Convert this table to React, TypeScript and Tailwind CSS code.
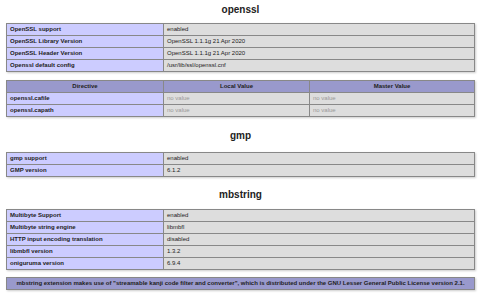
const font = { fontFamily: '"Liberation Sans", Arial, sans-serif' }

type Row = [string, string]

const KvTable = ({ rows }: { rows: Row[] }) => (
  <div className="mx-auto w-[469px] border-x border-b border-[#888] shadow-[1px_1px_2px_#ccc]">
    {rows.map(([k, v]) => (
      <div key={k} className="flex h-[12px] border-t border-[#888] text-[6px] leading-[11px] text-[#222]">
        <div className="w-[157px] shrink-0 border-r border-[#888] bg-[#ccf] pl-[3px] font-bold">{k}</div>
        <div className="flex-1 bg-[#ddd] pl-[3px]">{v}</div>
      </div>
    ))}
  </div>
)

const Title = ({ children, className }: { children: string; className: string }) => (
  <h2 className={`text-center text-[10px] leading-[12px] font-bold text-[#222] ${className}`}>{children}</h2>
)

export default function App() {
  return (
    <div className="h-[300px] w-[481px] overflow-hidden bg-white" style={font}>
      <Title className="pt-[4px] mb-[7px]">openssl</Title>
      <KvTable
        rows={[
          ['OpenSSL support', 'enabled'],
          ['OpenSSL Library Version', 'OpenSSL 1.1.1g  21 Apr 2020'],
          ['OpenSSL Header Version', 'OpenSSL 1.1.1g  21 Apr 2020'],
          ['Openssl default config', '/usr/lib/ssl/openssl.cnf'],
        ]}
      />

      <div className="mx-auto mt-[8px] w-[469px] border-x border-b border-[#888] shadow-[1px_1px_2px_#ccc] text-[6px] leading-[11px] text-[#222]">
        <div className="flex h-[12px] border-t border-[#888] bg-[#99c] font-bold text-center">
          <div className="w-[157px] shrink-0 border-r border-[#888]">Directive</div>
          <div className="w-[146px] shrink-0 border-r border-[#888]">Local Value</div>
          <div className="flex-1">Master Value</div>
        </div>
        {['openssl.cafile', 'openssl.capath'].map((d) => (
          <div key={d} className="flex h-[12px] border-t border-[#888]">
            <div className="w-[157px] shrink-0 border-r border-[#888] bg-[#ccf] pl-[3px] font-bold">{d}</div>
            <div className="w-[146px] shrink-0 border-r border-[#888] bg-[#ddd] pl-[3px] italic-none text-[#999]">no value</div>
            <div className="flex-1 bg-[#ddd] pl-[3px] text-[#999]">no value</div>
          </div>
        ))}
      </div>

      <Title className="mt-[13px] mb-[10px]">gmp</Title>
      <KvTable
        rows={[
          ['gmp support', 'enabled'],
          ['GMP version', '6.1.2'],
        ]}
      />

      <Title className="mt-[12px] mb-[8px]">mbstring</Title>
      <KvTable
        rows={[
          ['Multibyte Support', 'enabled'],
          ['Multibyte string engine', 'libmbfl'],
          ['HTTP input encoding translation', 'disabled'],
          ['libmbfl version', '1.3.2'],
          ['oniguruma version', '6.9.4'],
        ]}
      />

      <div className="mx-auto mt-[7px] h-[13px] w-[469px] border border-[#888] bg-[#99c] text-center text-[6px] leading-[11px] font-bold text-[#222] shadow-[1px_1px_2px_#ccc]">
        mbstring extension makes use of "streamable kanji code filter and converter", which is distributed under the GNU Lesser General Public License version 2.1.
      </div>
    </div>
  )
}
